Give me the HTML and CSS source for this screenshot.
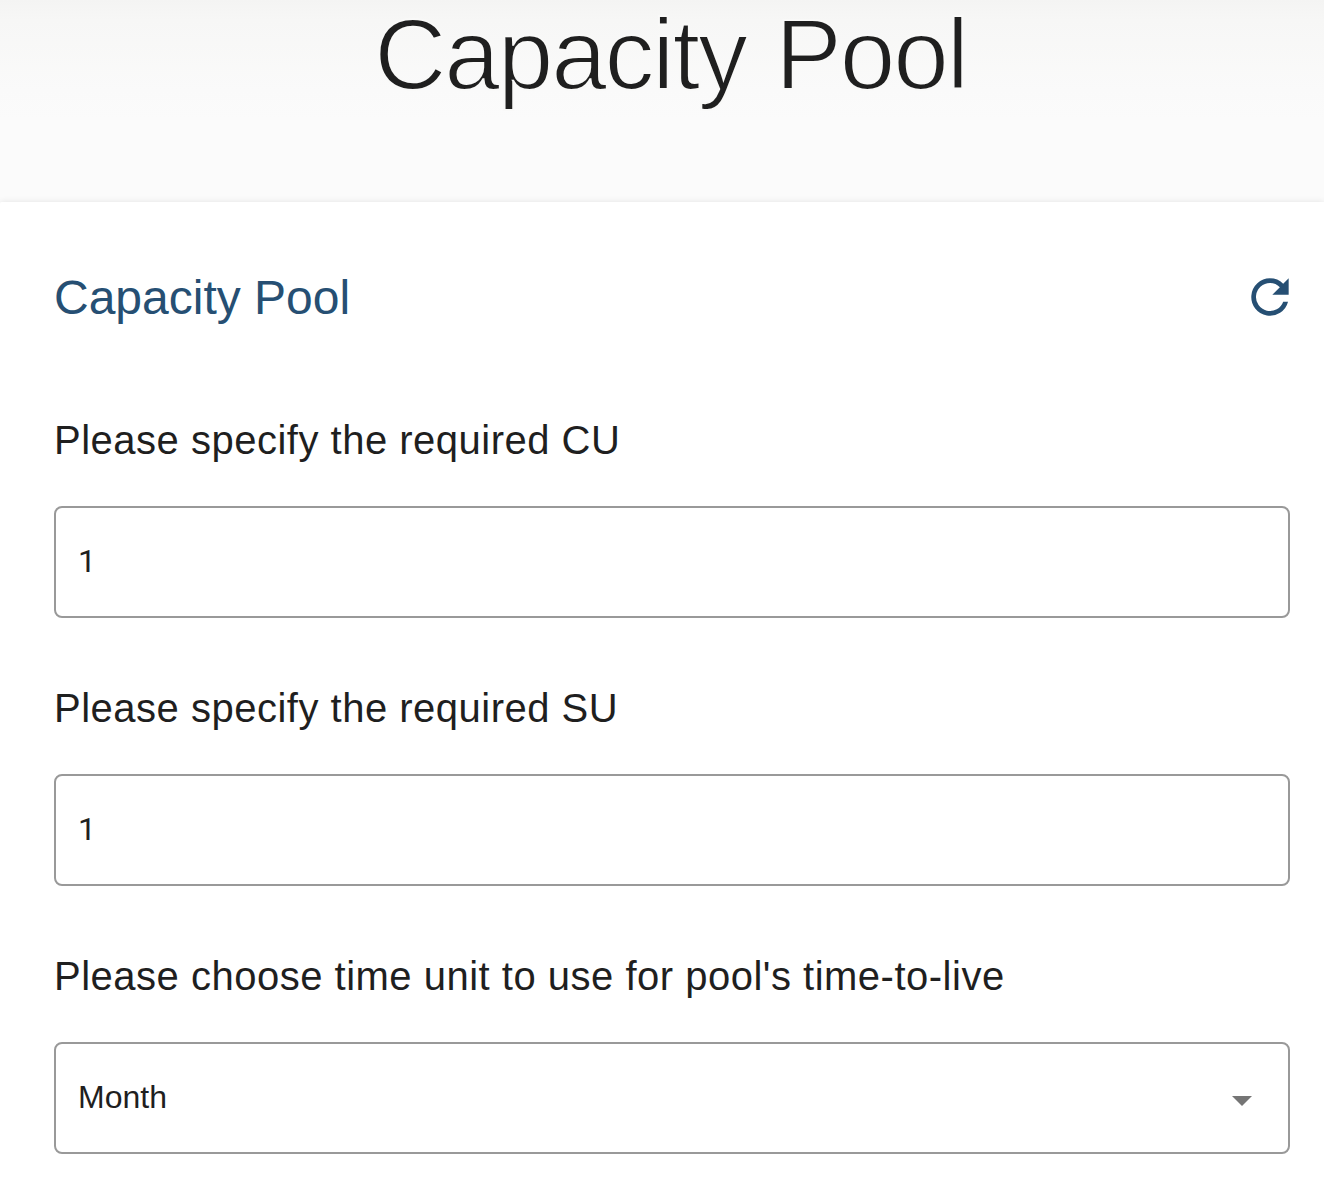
FILE: index.html
```html
<!DOCTYPE html>
<html lang="en">
<head>
<meta charset="utf-8">
<title>Capacity Pool</title>
<link rel="stylesheet" href="styles.css">
</head>
<body>
<header class="hero"><h1 class="hero-title">Capacity Pool</h1></header>
<main class="card">
  <div class="card-head">
    <h2 class="card-title">Capacity Pool</h2>
    <button class="refresh" type="button" aria-label="Refresh">
      <svg width="56" height="56" viewBox="0 0 24 24"><path fill="currentColor" d="M17.65 6.35A7.96 7.96 0 0 0 12 4a8 8 0 1 0 7.73 10h-2.08A6 6 0 1 1 12 6c1.66 0 3.14.69 4.22 1.78L13 11h7V4z"/></svg>
    </button>
  </div>
  <div class="field">
    <label class="label" for="cu">Please specify the required CU</label>
    <input class="control number" id="cu" type="text" value="1">
  </div>
  <div class="field">
    <label class="label" for="su">Please specify the required SU</label>
    <input class="control number" id="su" type="text" value="1">
  </div>
  <div class="field">
    <div class="label">Please choose time unit to use for pool's time-to-live</div>
    <div class="control select"><span>Month</span><svg class="arrow" width="20" height="10" viewBox="0 0 20 10"><path fill="currentColor" d="M0 0h20L10 10z"/></svg></div>
  </div>
</main>
</body>
</html>
```
FILE: styles.css
```css
* { box-sizing: border-box; }
body { margin: 0; background: #fff; color: #1f1f1f; font-family: "Liberation Sans", Arial, sans-serif; overflow: hidden; }
.hero { height: 202px; background: linear-gradient(#f4f4f3, #f7f7f6 20px, #fafafa 90px, #fbfbfb 120px, #fbfbfb); text-align: center; }
/* the background-coloured stroke slims the heading to a light weight */
.hero-title { margin: 0; padding-left: 17px; font-size: 100px; line-height: 109px; font-weight: 400; letter-spacing: -2.2px; word-spacing: 4px; -webkit-text-stroke: 2px #f9f9f8; }
.card { padding: 66px 34px 0 54px; height: 992px; background: #fff; box-shadow: 0 0 6px rgba(0, 0, 0, .1); border-top-left-radius: 2px; }
.card-head { display: flex; justify-content: space-between; height: 60px; }
.card-title { margin: 0; font-size: 48px; line-height: 60px; font-weight: 400; color: #264f73; }
.refresh { display: flex; align-items: flex-start; padding: 1px 0 0; border: 0; background: none; color: #264f73; margin-right: -8px; }
.field { margin-top: 54px; }
.card-head + .field { margin-top: 76px; }
.label { display: block; height: 102px; padding-top: 12px; font-size: 40px; line-height: 48px; letter-spacing: .5px; }
.control { display: flex; width: 100%; height: 112px; padding: 0 22px 2px; border: 2px solid #999; border-radius: 8px; background: #fff; color: #1f1f1f; font: 32px/48px "Liberation Sans", Arial, sans-serif; align-items: center; justify-content: space-between; }
.number { font-family: Roboto, "Liberation Sans", sans-serif; }
.arrow { color: #757575; margin: 8px 14px 0 0; }
```
